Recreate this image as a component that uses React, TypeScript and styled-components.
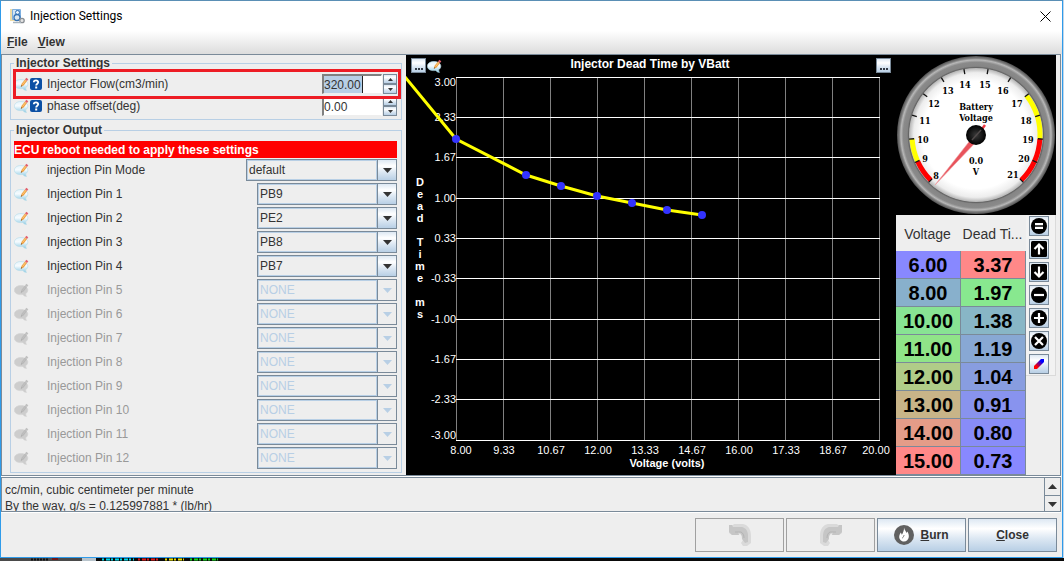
import React, { useState } from "react";
import styled, { createGlobalStyle, css } from "styled-components";

const line = "#7a8a99";
const pale = "#b8cfe5";
const face = "#eeeeee";
const ink = "#333333";
const steel = "linear-gradient(#dde8f3 0%, #ffffff 30%, #dde8f3 60%, #b8cfe5 100%)";

const GlobalStyle = createGlobalStyle`
  * { box-sizing: border-box; }
  body {
    margin: 0;
    background: #0a0a0a;
    font-family: "Liberation Sans", Arial, sans-serif;
    font-size: 12px;
    line-height: 14px;
    color: ${ink};
  }
  button, input, select { font: inherit; color: inherit; margin: 0; padding: 0; border-radius: 0; }
  svg { display: block; }
`;

const Desktop = styled.div`
  background: #c3d6e8;
  padding-right: 1px;
`;

const Window = styled.main`
  display: flex;
  flex-direction: column;
  background: ${face};
  border: 1px solid #2f9bea;
  border-top-color: #5a8fb5;
`;

const TitleBar = styled.header`
  display: flex;
  align-items: center;
  gap: 5px;
  height: 30px;
  padding: 0 10px 0 8px;
  background: #ffffff;
  color: #000000;
`;

const Title = styled.h1`
  flex: 1;
  margin: 0;
  font-family: Roboto, "Open Sans", sans-serif;
  font-size: 12px;
  font-weight: 400;
  line-height: 16px;
`;

const CloseBox = styled.button`
  width: 12px;
  height: 14px;
  border: 0;
  background: none;
`;

const MenuBar = styled.nav`
  display: flex;
  gap: 10px;
  height: 23px;
  padding: 4px 6px 0;
  background: linear-gradient(#ffffff, #dcdcdc);
`;

const MenuButton = styled.button`
  height: 14px;
  border: 0;
  background: none;
  font-weight: 700;
`;

const Content = styled.section`
  display: grid;
  grid-template-columns: 404px minmax(0, 1fr) 164px;
  border: 1px solid ${line};
  margin-right: 1px;
`;

const SettingsPanel = styled.form`
  display: flex;
  flex-direction: column;
  gap: 3px;
  padding: 1px 4px 0 8px;
`;

const Group = styled.fieldset`
  min-width: 0;
  margin: 0;
  padding: 3px 4px 2px 3px;
  border: 1px solid ${pale};
`;

const Legend = styled.legend`
  padding: 0 2px;
  font-weight: 700;
`;

const Banner = styled.p`
  margin: 1px 0 0;
  height: 17px;
  padding: 2px 0 1px;
  background: #ff0000;
  color: #ffffff;
  font-weight: 700;
`;

const Row = styled.div<{ $tall?: boolean; $off?: boolean }>`
  position: relative;
  display: grid;
  grid-template-columns: 33px 1fr auto;
  align-items: center;
  height: ${(p) => (p.$tall ? 24 : 22)}px;
  color: ${(p) => (p.$off ? "#999999" : ink)};
`;

const IconPair = styled.span`
  display: flex;
  align-items: center;
  gap: 1px;
`;

const Highlight = styled.span`
  position: absolute;
  z-index: 1;
  inset: -4px -4px -4px -1px;
  border: 3px solid #ed1c24;
  pointer-events: none;
`;

const Spinner = styled.span`
  display: grid;
  grid-template-columns: 60px 14px;
  gap: 1px;
  height: 20px;
`;

const NumberBox = styled.input`
  width: 100%;
  height: 20px;
  border: solid;
  border-width: 2px 1px 1px 2px;
  border-color: #808080 #ffffff #eeeeee #808080;
  background: #ffffff;
  outline: 0;
`;

const SelectedNumber = styled(NumberBox)`
  background: linear-gradient(90deg, ${pale} 38px, #222222 38px, #222222 39px, #ffffff 39px);
`;

const StepStack = styled.span`
  display: grid;
  grid-template-rows: 10px 10px;
`;

const raised = css`
  display: flex;
  align-items: center;
  justify-content: center;
  border: 1px solid ${line};
  background: ${steel};
`;

const StepButton = styled.button`
  ${raised}
`;

const Combo = styled.span<{ $wide?: boolean }>`
  display: grid;
  grid-template-columns: 1fr 19px;
  width: ${(p) => (p.$wide ? 151 : 140)}px;
  height: 22px;
  border: 1px solid ${line};
`;

const Select = styled.select`
  appearance: none;
  min-width: 0;
  height: 20px;
  padding: 0 1px;
  border: 1px solid ${pale};
  background: ${face};
  outline: 0;
  &:disabled { color: ${pale}; opacity: 1; }
`;

const ComboArrow = styled.span<{ $off?: boolean }>`
  display: flex;
  align-items: center;
  justify-content: center;
  border-left: 1px solid ${line};
  background: ${(p) => (p.$off ? face : steel)};
  color: ${(p) => (p.$off ? pale : ink)};
`;

const ChartPanel = styled.section`
  position: relative;
  background: #000000;
`;

const ChartTools = styled.div<{ $right?: boolean }>`
  position: absolute;
  top: 3px;
  ${(p) => (p.$right ? "right: 5px;" : "left: 5px;")}
  display: flex;
  align-items: center;
  gap: 1px;
`;

const DotsButton = styled.button`
  ${raised}
  align-items: flex-end;
  width: 15px;
  height: 15px;
  padding-bottom: 2px;
`;

const ChartSvg = styled.svg`
  width: 100%;
  height: auto;
  font-family: "Liberation Sans", Arial, sans-serif;
  font-size: 11px;
  fill: #ffffff;
`;

const SideColumn = styled.aside`
  display: flex;
  flex-direction: column;
`;

const GaugeBox = styled.div`
  display: flex;
  margin-right: 4px;
  background: #000000;
`;

const GaugeSvg = styled.svg`
  width: 160px;
  height: 160px;
  font-family: "DejaVu Serif Condensed", "DejaVu Serif", serif;
  font-size: 9px;
  font-weight: 700;
  text-anchor: middle;
`;

const TableArea = styled.div`
  display: grid;
  grid-template-columns: 130px 30px;
  align-items: start;
`;

const DataTable = styled.table`
  width: 130px;
  table-layout: fixed;
  border-collapse: separate;
  border-spacing: 0;
`;

const HeadCell = styled.th`
  height: 36px;
  padding: 2px 2px 0 0;
  font-size: 14px;
  font-weight: 400;
  line-height: 18px;
  white-space: nowrap;
`;

const Cell = styled.td<{ $color: string }>`
  height: 28px;
  padding: 0;
  border: solid ${line};
  border-width: 0 1px 1px 0;
  background: ${(p) => p.$color};
  color: #000000;
  font-size: 20px;
  font-weight: 700;
  line-height: 24px;
  text-align: center;
`;

const Toolbar = styled.div`
  display: flex;
  flex-direction: column;
  gap: 3px;
  padding: 1px 0 1px 3px;
  border: solid #dadada;
  border-width: 0 1px 1px 0;
  background: #f2f2f2;
`;

const ToolButton = styled.button`
  ${raised}
  width: 20px;
  height: 20px;
`;

const HelpPane = styled.section`
  display: grid;
  grid-template-columns: 1fr 16px;
  height: 35px;
  margin: 1px 1px 1px 0;
  border: 1px solid ${line};
  box-shadow: 0 1px 0 #ffffff, 0 -1px 0 #ffffff;
  overflow: hidden;
`;

const HelpText = styled.p`
  margin: 0;
  padding: 4px 3px 0;
  line-height: 16px;
`;

const ScrollBar = styled.div`
  display: grid;
  grid-template-rows: 1fr 1fr;
  gap: 1px;
  border-left: 1px solid ${line};
`;

const ScrollButton = styled.button`
  display: flex;
  align-items: center;
  justify-content: center;
  border: 0;
  border-bottom: 1px solid ${line};
  background: ${face};
`;

const Footer = styled.footer`
  display: flex;
  justify-content: flex-end;
  gap: 2px;
  padding: 5px;
`;

const ActionButton = styled.button`
  ${raised}
  gap: 6px;
  width: 89px;
  height: 34px;
  font-weight: 700;
  &:disabled { border-color: #a0a0a0; background: ${face}; }
`;

const Behind = styled.div`
  height: 3px;
  background: #0a0a0a;
`;

function NoteIcon({ off }: { off?: boolean }) {
  return (
    <svg width="15" height="14" viewBox="0 0 15 14" aria-hidden="true">
      <defs>
        <linearGradient id="bubble" x1="0" y1="0" x2="0" y2="1">
          <stop offset="0" stopColor="#e4f3fa" />
          <stop offset=".4" stopColor="#f6fbfe" />
          <stop offset="1" stopColor="#8fcbe4" />
        </linearGradient>
      </defs>
      <path
        d="M7 2.500C3 2.500 .4 4.600 .4 7.200S3 11.600 6.500 11.600c1 0 1.600 0 2.200-.2 1 1.200 2 2 3.800 2-.7-.9-.9-1.700-.7-2.800 1.300-.9 2-2 2-3.400 0-2.600-3-4.700-6.800-4.700z"
        fill={off ? "#cdcdcd" : "url(#bubble)"}
        stroke={off ? "#d4d4d4" : "#b4dbea"}
        strokeWidth=".6"
      />
      <path d="M6.800 9.800l.8-3 3.400-4.300 2 1.500-3.400 4.400z" fill={off ? "#b8b8b8" : "#f0a040"} />
      <path d="M8.600 7.400l3.300-4.200" stroke={off ? "#c4c4c4" : "#ffd590"} strokeWidth=".8" />
      <path d="M11 2.500l1.300-1.700 2 1.500L13 4z" fill={off ? "#c0c0c0" : "#e2606c"} />
      <path d="M6.800 9.800l.4-1.600 1.100.9z" fill={off ? "#a8a8a8" : "#5a4632"} />
    </svg>
  );
}

function HelpIcon() {
  return (
    <svg width="12" height="12" viewBox="0 0 12 12" aria-hidden="true">
      <rect width="12" height="12" rx="2" fill="#0c50a4" />
      <path d="M3.800 4.300C3.800 1.700 8.300 1.800 8.200 4.300 8.100 5.800 6.200 5.600 6.200 7.500" fill="none" stroke="#ffffff" strokeWidth="1.900" />
      <rect x="5.200" y="8.500" width="2" height="2" fill="#ffffff" />
    </svg>
  );
}

function Triangle({ up, w = 9 }: { up?: boolean; w?: number }) {
  const h = Math.ceil(w / 2);
  return (
    <svg width={w} height={h} viewBox={`0 0 ${w} ${h}`} aria-hidden="true">
      <path d={up ? `M0 ${h}H${w}L${w / 2} 0z` : `M0 0H${w}L${w / 2} ${h}z`} fill="currentColor" />
    </svg>
  );
}

function AppIcon() {
  return (
    <svg width="16" height="16" viewBox="0 0 16 16" aria-hidden="true">
      <path d="M1 1h4l1 1h4v11H1z" fill="#f0dca6" />
      <rect x="3" y="1" width="9" height="11" rx="1" fill="#7fb0e0" />
      <path d="M4 2h3v9H4z" fill="#cfe4f6" />
      <circle cx="8.500" cy="4.500" r="2" fill="#e9f3fb" stroke="#3472b4" />
      <circle cx="8" cy="9.500" r="3" fill="#dbe7f0" stroke="#3472b4" strokeWidth="1.300" />
      <circle cx="13" cy="12.500" r="2.200" fill="#e4e4e4" stroke="#8a8f94" strokeWidth="1.300" />
      <path d="M4 14.500h8" stroke="#a9b4bd" strokeWidth="1.500" />
    </svg>
  );
}

function Dots() {
  return (
    <svg width="8" height="2" viewBox="0 0 8 2" aria-hidden="true">
      <path d="M0 0h2v2H0zM3 0h2v2H3zM6 0h2v2H6z" fill="#333a44" />
    </svg>
  );
}

const gridY = [77, 117, 157, 198, 238, 278, 319, 359, 399, 440];
const yLabels = ["3.00", "2.33", "1.67", "1.00", "0.33", "-0.33", "-1.00", "-1.67", "-2.33", "-3.00"];
const xLabels = ["8.00", "9.33", "10.67", "12.00", "13.33", "14.67", "16.00", "17.33", "18.67", "20.00"];
const curve = [[456, 139], [526, 175], [561, 186], [597, 196], [632, 203], [667, 210], [702, 215]];

function Chart() {
  return (
    <ChartSvg viewBox="406 55 490 420" role="img" aria-label="Injector Dead Time by VBatt">
      <text x="650" y="68" textAnchor="middle" fontSize="12" fontWeight="700">Injector Dead Time by VBatt</text>
      {xLabels.map((t, i) => (
        <g key={t}>
          <rect x={456 + i * 47} y="77" width="1" height="364" fill="#808080" />
          <text x={i === 0 ? 461 : i === 9 ? 876 : 456 + i * 47 + 1} y="454" textAnchor="middle">{t}</text>
        </g>
      ))}
      {gridY.map((y, i) => (
        <g key={y}>
          <rect x="456" y={y} width="424" height="1" />
          <text x="456" y={i === 0 ? 86 : i === 9 ? 439 : y + 4} textAnchor="end">{yLabels[i]}</text>
        </g>
      ))}
      {"Dead Time ms".split("").map((c, i) => (
        <text key={i} x="420" y={186 + i * 12} textAnchor="middle" fontWeight="700">{c}</text>
      ))}
      <text x="667" y="467" textAnchor="middle" fontWeight="700">Voltage (volts)</text>
      <polyline
        points={"405,77 " + curve.map((p) => p.join(",")).join(" ")}
        fill="none"
        stroke="#ffff00"
        strokeWidth="3"
      />
      {curve.map(([x, y]) => (
        <circle key={x} cx={x} cy={y} r="4" fill="#3333ff" />
      ))}
    </ChartSvg>
  );
}

const gaugeNumbers: [number, number, number][] = [
  [8, 40, 121], [9, 29, 104], [10, 27, 85], [11, 29, 66], [12, 38, 49], [13, 52, 36], [14, 69, 30],
  [15, 89, 30], [16, 107, 36], [17, 121, 49], [18, 130, 66], [19, 132, 85], [20, 128, 104], [21, 117, 120],
];

function polar(v: number, r: number) {
  const a = ((135 + ((v - 8) * 270) / 13) * Math.PI) / 180;
  return [80 + r * Math.cos(a), 80 + r * Math.sin(a)];
}

function arc(from: number, to: number, r: number) {
  const [x1, y1] = polar(from, r);
  const [x2, y2] = polar(to, r);
  return `M${x1} ${y1}A${r} ${r} 0 0 1 ${x2} ${y2}`;
}

function Gauge() {
  return (
    <GaugeSvg viewBox="0 0 160 160" role="img" aria-label="Battery Voltage 0.0 V">
      <defs>
        <radialGradient id="rim" cx="80" cy="80" r="79" gradientUnits="userSpaceOnUse">
          <stop offset="0.850" stopColor="#5c5c5c" />
          <stop offset="0.870" stopColor="#858585" />
          <stop offset="0.920" stopColor="#8a8a8a" />
          <stop offset="0.950" stopColor="#b8b8b8" />
          <stop offset="0.970" stopColor="#808080" />
          <stop offset="1" stopColor="#505050" />
        </radialGradient>
        <radialGradient id="dial" cx="80" cy="80" r="67" gradientUnits="userSpaceOnUse">
          <stop offset="0.800" stopColor="#ffffff" />
          <stop offset="0.930" stopColor="#ededed" />
          <stop offset="1" stopColor="#b4b4b4" />
        </radialGradient>
        <radialGradient id="hub">
          <stop offset="0" stopColor="#3a3a3a" />
          <stop offset="1" stopColor="#000000" />
        </radialGradient>
      </defs>
      <circle cx="80" cy="80" r="79" fill="url(#rim)" />
      <circle cx="80" cy="80" r="67" fill="url(#dial)" />
      <g fill="none" strokeWidth="5">
        <path d={arc(8, 9, 64)} stroke="#ff0000" />
        <path d={arc(9, 10, 64)} stroke="#ffff00" />
        <path d={arc(17, 19, 64)} stroke="#ffff00" />
        <path d={arc(19, 21, 64)} stroke="#ff0000" />
      </g>
      {gaugeNumbers.map(([v, x, y]) => {
        const [x1, y1] = polar(v, 62);
        const [x2, y2] = polar(v, 67);
        return (
          <g key={v}>
            <line x1={x1} y1={y1} x2={x2} y2={y2} stroke="#111111" strokeWidth="1.300" />
            <text x={x} y={y + 3}>{v}</text>
          </g>
        );
      })}
      <text x="80" y="55">Battery</text>
      <text x="80" y="66">Voltage</text>
      <text x="80" y="109">0.0</text>
      <text x="80" y="120">V</text>
      <path d="M39 130L76 83 80 87z" fill="#e8535b" stroke="#f0a0a4" strokeWidth=".6" />
      <path d="M86 74l3-4" stroke="#ee3b45" strokeWidth="2.500" />
      <circle cx="80" cy="80" r="10" fill="url(#hub)" />
      <path d="M76 85l9-10" stroke="#504a4a" strokeWidth="1.500" />
    </GaugeSvg>
  );
}

const readings = [
  ["6.00", "#8888ff", "3.37", "#ff8888"],
  ["8.00", "#88b0cc", "1.97", "#88e88f"],
  ["10.00", "#88e393", "1.38", "#88b6c6"],
  ["11.00", "#90e488", "1.19", "#88a8d4"],
  ["12.00", "#b0cc88", "1.04", "#889de0"],
  ["13.00", "#c8b488", "0.91", "#8893ee"],
  ["14.00", "#e49c88", "0.80", "#888cf8"],
  ["15.00", "#ff8888", "0.73", "#8888ff"],
];

const tools = [
  { name: "Set equal", d: "M4 6.200h8M4 9.800h8" },
  { name: "Increase", square: true, d: "M8 13.500V4M3.500 8L8 3.500 12.500 8" },
  { name: "Decrease", square: true, d: "M8 2.500V12M3.500 8L8 12.500 12.500 8" },
  { name: "Subtract", d: "M3 8h10" },
  { name: "Add", d: "M3 8h10M8 3v10" },
  { name: "Multiply", d: "M4 4l8 8M12 4l-8 8" },
];

const pins = ["PB9", "PE2", "PB8", "PB7", ...Array(8).fill("NONE")];

function ComboField({ id, value, wide, off }: { id: string; value: string; wide?: boolean; off?: boolean }) {
  return (
    <Combo $wide={wide}>
      <Select id={id} disabled={off} defaultValue={value}>
        <option>{value}</option>
      </Select>
      <ComboArrow $off={off}><Triangle /></ComboArrow>
    </Combo>
  );
}

function SpinnerField({ id, start, selected }: { id: string; start: string; selected?: boolean }) {
  const [value, setValue] = useState(start);
  const step = (n: number) => setValue((parseFloat(value || "0") + n).toFixed(2));
  const Box = selected && value === start ? SelectedNumber : NumberBox;
  return (
    <Spinner>
      <Box id={id} value={value} onChange={(e: React.ChangeEvent<HTMLInputElement>) => setValue(e.target.value)} />
      <StepStack>
        <StepButton type="button" aria-label="Increase" onClick={() => step(1)}><Triangle up w={5} /></StepButton>
        <StepButton type="button" aria-label="Decrease" onClick={() => step(-1)}><Triangle w={5} /></StepButton>
      </StepStack>
    </Spinner>
  );
}

function TurnArrow({ redo }: { redo?: boolean }) {
  return (
    <svg width="24" height="24" viewBox="0 0 24 24" aria-hidden="true">
      <g transform={redo ? "matrix(-1 0 0 1 24 0)" : undefined}>
        <path d="M1 2h4l1-1h9c5 1 8 5 8 12v7l-4 3h-4l-2-3 2-3c0-3-1-5-3-6l-2 1H4l-3-2z" fill="#dadada" />
        <path d="M1 2h3l1 2h9c4 1 6 4 6 9v6l-3 1-3-4c0-4-1-6-4-7l1 3H4l-3-3z" fill="#c6c6c6" />
        <path d="M7 9h6c2 1 3 3 3 6" stroke="#b4b4b4" fill="none" />
      </g>
    </svg>
  );
}

export default function App() {
  return (
    <>
      <GlobalStyle />
      <Desktop>
        <Window>
          <TitleBar>
            <AppIcon />
            <Title>Injection Settings</Title>
            <CloseBox aria-label="Close window">
              <svg width="11" height="11" viewBox="0 0 11 11"><path d="M.5.5l10 10M10.500.5l-10 10" stroke="#000000" /></svg>
            </CloseBox>
          </TitleBar>
          <MenuBar>
            <MenuButton><u>F</u>ile</MenuButton>
            <MenuButton><u>V</u>iew</MenuButton>
          </MenuBar>
          <Content>
            <SettingsPanel>
              <Group>
                <Legend>Injector Settings</Legend>
                <Row>
                  <IconPair><NoteIcon /><HelpIcon /></IconPair>
                  <label htmlFor="flow">Injector Flow(cm3/min)</label>
                  <SpinnerField id="flow" start="320.00" selected />
                  <Highlight />
                </Row>
                <Row>
                  <IconPair><NoteIcon /><HelpIcon /></IconPair>
                  <label htmlFor="phase">phase offset(deg)</label>
                  <SpinnerField id="phase" start="0.00" />
                </Row>
              </Group>
              <Group>
                <Legend>Injector Output</Legend>
                <Banner>ECU reboot needed to apply these settings</Banner>
                <Row $tall>
                  <NoteIcon />
                  <label htmlFor="mode">injection Pin Mode</label>
                  <ComboField id="mode" value="default" wide />
                </Row>
                {pins.map((pin, i) => (
                  <Row key={i} $tall $off={i > 3}>
                    <NoteIcon off={i > 3} />
                    <label htmlFor={`pin${i + 1}`}>{`Injection Pin ${i + 1}`}</label>
                    <ComboField id={`pin${i + 1}`} value={pin} off={i > 3} />
                  </Row>
                ))}
              </Group>
            </SettingsPanel>
            <ChartPanel>
              <Chart />
              <ChartTools>
                <DotsButton aria-label="Y axis options"><Dots /></DotsButton>
                <NoteIcon />
              </ChartTools>
              <ChartTools $right>
                <DotsButton aria-label="Chart options"><Dots /></DotsButton>
              </ChartTools>
            </ChartPanel>
            <SideColumn>
              <GaugeBox><Gauge /></GaugeBox>
              <TableArea>
                <DataTable>
                  <thead>
                    <tr><HeadCell scope="col">Voltage</HeadCell><HeadCell scope="col">Dead Ti...</HeadCell></tr>
                  </thead>
                  <tbody>
                    {readings.map(([v, vc, t, tc]) => (
                      <tr key={v}><Cell $color={vc}>{v}</Cell><Cell $color={tc}>{t}</Cell></tr>
                    ))}
                  </tbody>
                </DataTable>
                <Toolbar>
                  {tools.map((t) => (
                    <ToolButton key={t.name} aria-label={t.name}>
                      <svg width="16" height="16" viewBox="0 0 16 16">
                        {t.square ? <rect width="16" height="16" rx="1.500" /> : <circle cx="8" cy="8" r="8" />}
                        <path d={t.d} fill="none" stroke="#ffffff" strokeWidth="2.200" />
                      </svg>
                    </ToolButton>
                  ))}
                  <ToolButton aria-label="Interpolate">
                    <svg width="12" height="12" viewBox="0 0 12 12">
                      <defs>
                        <linearGradient id="blend" x1="0" y1="1" x2="1" y2="0">
                          <stop offset=".25" stopColor="#ff0000" />
                          <stop offset=".75" stopColor="#0000ff" />
                        </linearGradient>
                      </defs>
                      <path d="M1 8L8 1h3v3L4 11H1z" fill="url(#blend)" />
                    </svg>
                  </ToolButton>
                </Toolbar>
              </TableArea>
            </SideColumn>
          </Content>
          <HelpPane>
            <HelpText>
              cc/min, cubic centimeter per minute
              <br />
              By the way, g/s = 0.125997881 * (lb/hr)
            </HelpText>
            <ScrollBar>
              <ScrollButton aria-label="Scroll up"><Triangle up /></ScrollButton>
              <ScrollButton aria-label="Scroll down"><Triangle /></ScrollButton>
            </ScrollBar>
          </HelpPane>
          <Footer>
            <ActionButton disabled aria-label="Undo"><TurnArrow /></ActionButton>
            <ActionButton disabled aria-label="Redo"><TurnArrow redo /></ActionButton>
            <ActionButton>
              <svg width="20" height="20" viewBox="0 0 20 20" aria-hidden="true">
                <circle cx="10" cy="10" r="10" fill="#606060" />
                <path d="M10 2.500c.5 2.500 2 3.500 2.500 5.500l.8-1.500c1.200 1.800 1.700 3.500 1.500 5.500-.3 2.500-2.300 4.500-4.800 4.500S5.300 14.500 5.200 12c0-2 .8-3 1.600-4.500.5.800.8 1.500 1 2.300C9.200 7.800 10.200 5 10 2.500z" fill="#ffffff" />
                <path d="M10 10c.3 1.500-1.500 2-1.500 3.300" stroke="#606060" fill="none" strokeWidth=".8" />
              </svg>
              <span><u>B</u>urn</span>
            </ActionButton>
            <ActionButton><span><u>C</u>lose</span></ActionButton>
          </Footer>
        </Window>
      </Desktop>
      <Behind>
        <svg width="260" height="3" viewBox="0 0 260 3" aria-hidden="true">
          <rect width="82" height="3" fill="#4a4a4a" />
          <path d="M31 1.500h17" stroke="#111111" strokeWidth="2" strokeDasharray="2 1" />
          <rect x="52" width="6" height="2" fill="#701818" />
          <rect x="82" width="14" height="3" fill="#b8c4cc" />
          <g strokeWidth="2" strokeDasharray="2 2 4 1">
            <path d="M102 1.500h32" stroke="#00d8e8" />
            <path d="M138 1.500h22" stroke="#e01818" />
            <path d="M165 1.500h19" stroke="#e8e000" />
            <path d="M190 1.500h28" stroke="#10d818" />
          </g>
        </svg>
      </Behind>
    </>
  );
}
